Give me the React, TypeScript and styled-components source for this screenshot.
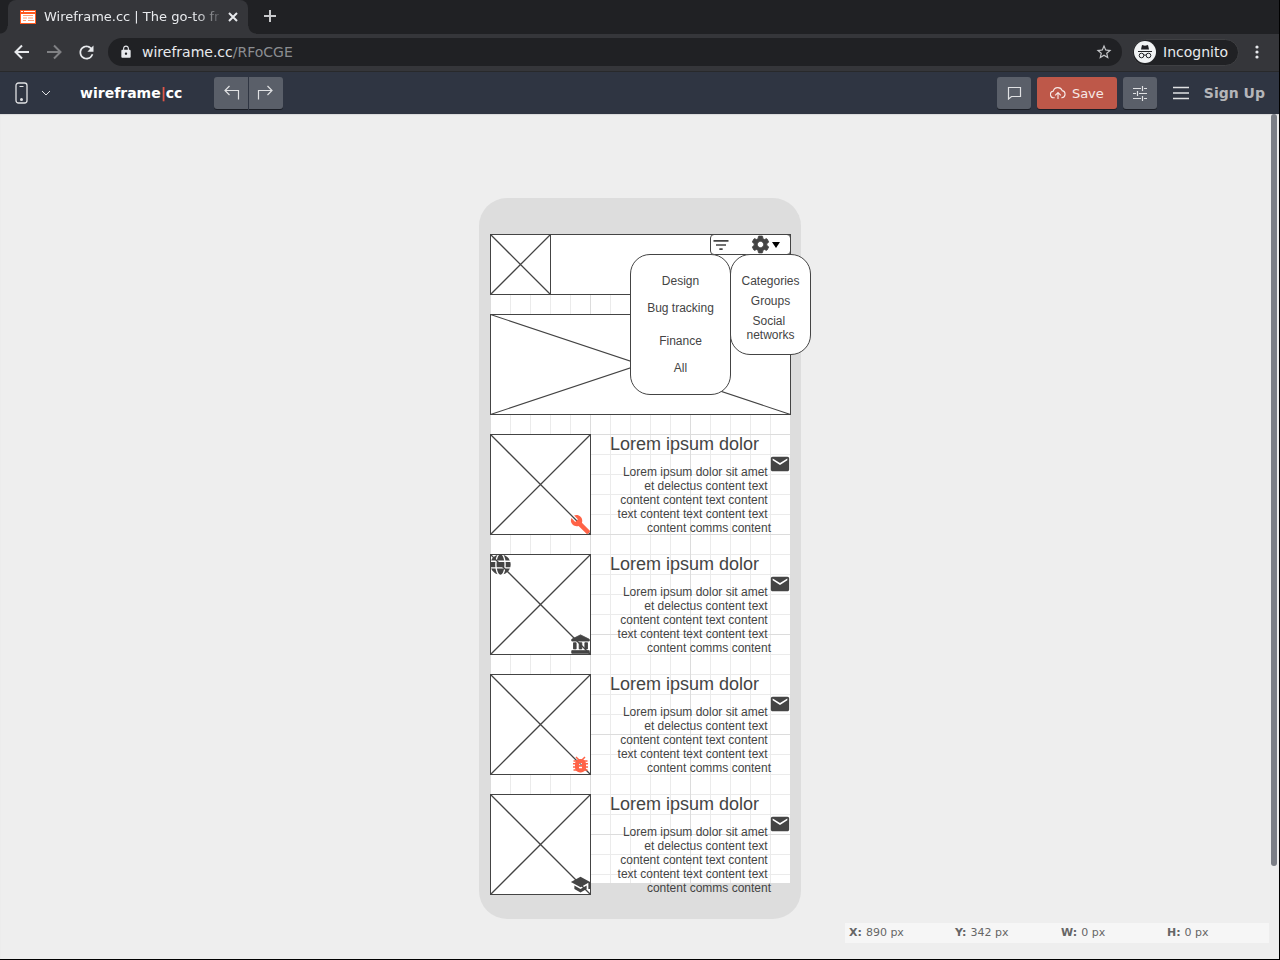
import React from "react";
import styled, { createGlobalStyle, css } from "styled-components";
import { MdFilterList, MdSettings, MdEmail, MdBuild, MdAccountBalance, MdSchool, MdStarBorder, MdRefresh, MdLock } from "react-icons/md";

const uiFont = '"DejaVu Sans", sans-serif';
const wireFont = '"Liberation Sans", Arial, sans-serif';
const ink = "#444444";
const accent = "#ff6347";

const GlobalStyle = createGlobalStyle`
  *, *::before, *::after { box-sizing: border-box; }
  body { margin: 0; background: #eeeeee; font-family: ${uiFont}; }
  button { font: inherit; color: inherit; border: 0; padding: 0; background: none; }
  h2, p, ul { margin: 0; padding: 0; }
  svg { display: block; flex: none; }
`;

const Window = styled.div`
  display: flex;
  flex-direction: column;
  min-height: 100vh;
  border-right: 1px solid #000;
  border-bottom: 1px solid #000;
`;

const TabStrip = styled.header`
  display: flex;
  height: 34px;
  padding-left: 8px;
  background: #202124;
`;

const Tab = styled.div`
  position: relative;
  display: flex;
  align-items: center;
  gap: 8px;
  width: 240px;
  padding: 0 10px 0 12px;
  border-radius: 8px 8px 0 0;
  background: #35363a;
  color: #e8eaed;
  font-size: 13px;
  &::before, &::after {
    content: "";
    position: absolute;
    bottom: 0;
    width: 8px;
    height: 8px;
  }
  &::before {
    left: -8px;
    background: radial-gradient(circle at 0 0, #202124 7px, #35363a 8px);
  }
  &::after {
    right: -8px;
    background: radial-gradient(circle at 100% 0, #202124 7px, #35363a 8px);
  }
`;

const TabTitle = styled.span`
  flex: 1;
  white-space: nowrap;
  line-height: 20px;
  mask-image: linear-gradient(to right, #000 152px, transparent 180px);
`;

const IconButton = styled.button<{ $w: number }>`
  display: flex;
  align-items: center;
  justify-content: center;
  width: ${(p) => p.$w}px;
  height: 32px;
  color: #e8eaed;
`;

const AddressBar = styled.div`
  display: flex;
  align-items: center;
  height: 38px;
  padding: 0 6px 1px;
  background: #35363a;
  border-bottom: 1px solid #28292b;
`;

const Omnibox = styled.div`
  flex: 1;
  display: flex;
  align-items: center;
  height: 28px;
  margin-left: 6px;
  padding: 0 9px 0 11px;
  gap: 9px;
  border-radius: 14px;
  background: #202124;
  color: #e8eaed;
  font-size: 14px;
`;

const Url = styled.span`
  flex: 1;
  line-height: 20px;
  span { color: #8b8d91; }
`;

const IncognitoChip = styled.div`
  display: flex;
  align-items: center;
  gap: 7px;
  height: 27px;
  margin: 0 2px 0 10px;
  padding: 0 10px 0 1px;
  border: 1px solid #3f4043;
  border-radius: 14px;
  background: #202124;
  color: #e8eaed;
  font-size: 14px;
`;

const AppBar = styled.nav`
  display: flex;
  align-items: center;
  height: 42px;
  padding: 0 14px;
  background: #2f3542;
  color: #e0e1e3;
`;

const DeviceButton = styled.button`
  display: flex;
  align-items: center;
  gap: 12px;
`;

const Logo = styled.a`
  margin: 0 32px 0 29px;
  color: #fff;
  font-size: 14px;
  font-weight: bold;
  line-height: 20px;
  text-decoration: none;
  span { color: #e05a4a; }
`;

const toolFace = css`
  display: flex;
  align-items: center;
  justify-content: center;
  height: 32px;
  box-shadow: 0 1px 0 #1b1e26;
`;

const ToolButton = styled.button<{ $radius?: string }>`
  ${toolFace}
  width: 34px;
  background: #5a5f69;
  border-radius: ${(p) => p.$radius ?? "3px"};
`;

const SaveButton = styled.button`
  ${toolFace}
  width: 80px;
  gap: 6px;
  margin: 0 6px;
  border-radius: 3px;
  background: #be5849;
  color: #f6e9e7;
  font-size: 13px;
`;

const History = styled.div`
  display: flex;
  gap: 1px;
  margin-right: auto;
`;

const MenuButton = styled.button`
  margin: 0 15px 0 16px;
`;

const SignUp = styled.a`
  color: #b5b6b9;
  font-size: 14px;
  font-weight: bold;
  text-decoration: none;
`;

const Canvas = styled.main`
  position: relative;
  flex: 1;
  display: flex;
  justify-content: center;
  align-items: flex-start;
  padding: 84px 0 40px 1px;
  background: #eeeeee;
  box-shadow: inset 0 1px 1px #d9d9da;
`;

const ScrollThumb = styled.div`
  position: absolute;
  top: 0;
  right: 2px;
  width: 6px;
  height: 752px;
  border-radius: 3px;
  background: #7b7e86;
`;

const Phone = styled.section`
  width: 322px;
  padding: 36px 11px;
  border-radius: 28px;
  background: #dddddd;
`;

const Screen = styled.div`
  position: relative;
  display: flex;
  flex-direction: column;
  gap: 19px;
  height: 649px;
  background-color: #fff;
  background-image:
    linear-gradient(to right, #dcdcdc 1px, transparent 1px),
    linear-gradient(to bottom, #dcdcdc 1px, transparent 1px),
    linear-gradient(to right, #ebebeb 1px, transparent 1px),
    linear-gradient(to bottom, #ebebeb 1px, transparent 1px);
  background-size: 100px 100px, 100px 100px, 20px 20px, 20px 20px;
  color: ${ink};
  font-family: ${wireFont};
  font-size: 12px;
  line-height: 14px;
`;

const WireHeader = styled.div`
  display: flex;
  justify-content: space-between;
  flex: none;
  width: 301px;
  height: 61px;
  border: 1px solid ${ink};
  background: #fff;
`;

const HeaderLogo = styled.div`
  width: 61px;
  margin: -1px;
`;

const HeaderTools = styled.div`
  display: flex;
  align-items: center;
  width: 81px;
  height: 21px;
  margin: -1px;
  border: 1px solid ${ink};
  border-radius: 4px;
`;

const SettingsGroup = styled.span`
  display: flex;
  align-items: center;
  gap: 1px;
  margin-left: 19px;
`;

const HeavyIcon = styled.span`
  path:not([fill="none"]) {
    stroke: currentColor;
    stroke-width: 1px;
  }
`;

const Picture = styled.div<{ $h: number }>`
  position: relative;
  flex: none;
  height: ${(p) => p.$h}px;
`;

const Banner = styled(Picture)`
  width: 301px;
`;

const CrossDrawing = styled.svg`
  background: #fff;
`;

const Popup = styled.ul<{ $x: number; $w: number; $gap: number; $h: number }>`
  position: absolute;
  top: 20px;
  left: ${(p) => p.$x}px;
  display: flex;
  flex-direction: column;
  gap: ${(p) => p.$gap}px;
  width: ${(p) => p.$w}px;
  height: ${(p) => p.$h}px;
  padding-top: 19px;
  border: 1px solid ${ink};
  border-radius: 20px;
  background: #fff;
  list-style: none;
  text-align: center;
  white-space: pre;
`;

const Divided = styled.li`
  margin-top: 6px;
`;

const Article = styled.article`
  display: flex;
  height: 101px;
  flex: none;
`;

const Thumb = styled(Picture)`
  width: 101px;
`;

const Badge = styled.span<{ $corner: "start" | "end"; $color?: string }>`
  position: absolute;
  color: ${(p) => p.$color ?? ink};
  ${(p) => (p.$corner === "end" ? "right: 0; bottom: 0;" : "left: 0; top: 0;")}
`;

const Copy = styled.div`
  flex: none;
  width: 161px;
  margin-left: 19px;
`;

const Title = styled.h2`
  font-size: 18px;
  font-weight: normal;
  line-height: 20px;
  white-space: nowrap;
`;

const Body = styled.p`
  margin-top: 11px;
  text-align: right;
  white-space: pre;
`;

const MailSlot = styled.span`
  margin-top: 19px;
  margin-left: -2px;
`;

const StatusBar = styled.dl`
  position: absolute;
  right: 10px;
  bottom: 16px;
  display: grid;
  grid-template-columns: repeat(4, 106px);
  margin: 0;
  background: #f6f6f6;
  color: #666;
  font-size: 11px;
  line-height: 20px;
`;

const Stat = styled.div`
  display: flex;
  gap: 4px;
  padding-left: 4px;
  dt { font-weight: bold; }
  dd { margin: 0; }
`;

function Cross({ w, h }: { w: number; h: number }) {
  return (
    <CrossDrawing width={w} height={h} viewBox={`0 0 ${w} ${h}`} fill="none" stroke={ink}>
      <path
        d={`M.5 .5L${w - 0.5} ${h - 0.5}M${w - 0.5} .5L.5 ${h - 0.5}`}
        strokeWidth={w === h ? 1.3 : 1.1}
      />
      <rect x=".5" y=".5" width={w - 1} height={h - 1} />
    </CrossDrawing>
  );
}

function Globe() {
  return (
    <svg width="21" height="21" viewBox="0 0 496 512" fill="currentColor">
      <path d="M336.500 160C322 70.700 287.800 8 248 8s-74 62.700-88.500 152h177zM152 256c0 22.200 1.200 43.500 3.300 64h185.300c2.100-20.500 3.300-41.800 3.300-64s-1.200-43.500-3.300-64H155.300c-2.100 20.500-3.300 41.800-3.300 64zm324.700-96c-28.600-67.900-86.500-120.400-158-141.600 24.400 33.800 41.200 84.700 50 141.600h108zM177.200 18.400C105.800 39.600 47.800 92.100 19.300 160h108c8.700-56.900 25.500-107.800 49.900-141.600zM487.400 192H372.700c2.100 21 3.300 42.500 3.300 64s-1.200 43-3.300 64h114.600c5.500-20.500 8.600-41.800 8.600-64s-3.100-43.500-8.500-64zM120 256c0-21.500 1.200-43 3.300-64H8.600C3.200 212.500 0 233.800 0 256s3.200 43.500 8.600 64h114.600c-2-21-3.200-42.500-3.200-64zm39.500 96c14.500 89.300 48.700 152 88.500 152s74-62.700 88.500-152h-177zm159.300 141.600c71.400-21.200 129.400-73.700 158-141.600h-108c-8.800 56.900-25.600 107.800-50 141.600zM19.300 352c28.600 67.900 86.500 120.400 158 141.600-24.400-33.800-41.200-84.700-50-141.600h-108z" />
    </svg>
  );
}

function Bug() {
  return (
    <svg width="21" height="21" viewBox="0 0 21 21" stroke="currentColor" fill="currentColor">
      <path d="M6 3l3 3M15 3l-3 3M3.500 7h14M3 9.700h15M3 13h15M3.500 16h14" strokeWidth="1.500" />
      <rect x="5" y="5" width="11" height="13.500" rx="5" stroke="none" />
      <path d="M9 10h3M9 13.500h3" stroke="#fff" strokeWidth="1.500" />
      <path d="M9.500 9l2 2" stroke={ink} strokeWidth="1" />
    </svg>
  );
}

const bodyText =
  "Lorem ipsum dolor sit amet \net delectus content text \ncontent content text content \ntext content text content text \ncontent comms content";

const articles = [
  { end: <MdBuild size={21} />, color: accent, globe: false },
  {
    end: (
      <HeavyIcon>
        <MdAccountBalance size={21} />
      </HeavyIcon>
    ),
    color: ink,
    globe: true,
  },
  { end: <Bug />, color: accent, globe: false },
  { end: <MdSchool size={21} />, color: ink, globe: false },
];

const stats = [
  ["X:", "890 px"],
  ["Y:", "342 px"],
  ["W:", "0 px"],
  ["H:", "0 px"],
];

export default function App() {
  return (
    <>
      <GlobalStyle />
      <Window>
        <TabStrip>
          <Tab>
            <svg width="16" height="14" viewBox="0 0 16 14">
              <rect width="16" height="14" fill="#ff5a1f" />
              <path d="M1 1h2v1H1zM4 1h11v1H4z" fill="#fff" />
              <path d="M1 4h14v9H1z" fill="#fff" />
              <path d="M3 5.500h10M3 8h4M8 8h5M3 10.500h3M8 10.500h6" stroke="#ff9a70" />
            </svg>
            <TabTitle>Wireframe.cc | The go-to fr</TabTitle>
            <button aria-label="Close tab">
              <svg width="14" height="12" viewBox="0 0 14 12" stroke="#e8eaed" strokeWidth="2">
                <path d="M2 2l8 8M10 2l-8 8" />
              </svg>
            </button>
          </Tab>
          <IconButton $w={44} aria-label="New tab">
            <svg width="14" height="14" viewBox="0 0 14 14" stroke="#c9cacc" strokeWidth="2">
              <path d="M7 1v12M1 7h12" />
            </svg>
          </IconButton>
        </TabStrip>
        <AddressBar>
          <IconButton $w={32} aria-label="Back">
            <svg width="16" height="16" viewBox="0 0 16 16" fill="none" stroke="currentColor" strokeWidth="2">
              <path d="M15 8H2M8 1.500L1.500 8 8 14.500" />
            </svg>
          </IconButton>
          <IconButton $w={32} aria-label="Forward">
            <svg width="16" height="16" viewBox="0 0 16 16" fill="none" stroke="#808184" strokeWidth="2">
              <path d="M1 8h13M8 1.500L14.500 8 8 14.500" />
            </svg>
          </IconButton>
          <IconButton $w={32} aria-label="Reload">
            <MdRefresh size={21} />
          </IconButton>
          <Omnibox>
            <MdLock size={14} />
            <Url>
              wireframe.cc<span>/RFoCGE</span>
            </Url>
            <MdStarBorder size={18} color="#c4c6c9" />
          </Omnibox>
          <IncognitoChip>
            <svg width="22" height="22" viewBox="0 0 22 22">
              <circle cx="11" cy="11" r="11" fill="#f1f3f4" />
              <path d="M7 8.500l1-4.500 3 .8 3-.8 1 4.500z" fill="#202124" />
              <path d="M4 10.500h14" stroke="#202124" strokeWidth="1" />
              <g fill="none" stroke="#202124">
                <circle cx="7.500" cy="14.500" r="2.300" />
                <circle cx="14.500" cy="14.500" r="2.300" />
                <path d="M9.800 14.300q1.200-.8 2.400 0" />
              </g>
            </svg>
            Incognito
          </IncognitoChip>
          <IconButton $w={32} aria-label="Browser menu">
            <svg width="4" height="16" viewBox="0 0 4 16" fill="currentColor">
              <circle cx="2" cy="3" r="1.600" />
              <circle cx="2" cy="8" r="1.600" />
              <circle cx="2" cy="13" r="1.600" />
            </svg>
          </IconButton>
        </AddressBar>
        <AppBar>
          <DeviceButton aria-label="Device">
            <svg width="15" height="22" viewBox="0 0 15 22" fill="none" stroke="currentColor">
              <rect x="2" y="1" width="11" height="20" rx="2.500" strokeWidth="1.300" />
              <path d="M5.500 4.500h4" />
              <circle cx="7.500" cy="17.500" r="1.500" fill="currentColor" stroke="none" />
            </svg>
            <svg width="10" height="6" viewBox="0 0 10 6" fill="none" stroke="currentColor">
              <path d="M1 1l4 4 4-4" />
            </svg>
          </DeviceButton>
          <Logo href="#">
            wireframe<span>|</span>cc
          </Logo>
          <History>
            <ToolButton $radius="3px 0 0 3px" aria-label="Undo">
              <svg width="18" height="16" viewBox="0 0 18 16" fill="none" stroke="currentColor" strokeWidth="1.200">
                <path d="M16.500 14.500V5.500H3M7.500 1L3 5.500 7.500 10" />
              </svg>
            </ToolButton>
            <ToolButton $radius="0 3px 3px 0" aria-label="Redo">
              <svg width="18" height="16" viewBox="0 0 18 16" fill="none" stroke="currentColor" strokeWidth="1.200">
                <path d="M1.500 14.500V5.500H15M10.500 1L15 5.500 10.500 10" />
              </svg>
            </ToolButton>
          </History>
          <ToolButton aria-label="Comments">
            <svg width="16" height="14" viewBox="0 0 16 14" fill="none" stroke="currentColor" strokeWidth="1.200">
              <path d="M2.500 1.500h12v9h-9l-3 2.500z" />
            </svg>
          </ToolButton>
          <SaveButton>
            <svg width="16" height="14" viewBox="0 0 17 14" fill="none" stroke="currentColor" strokeWidth="1.200">
              <path d="M5 12H4.500A3.500 3.500 0 0 1 3.500 5 5 5 0 0 1 13 4.500 3.800 3.800 0 0 1 12.500 12H12M8.500 13.500V7M5.500 9.500l3-3 3 3" />
            </svg>
            Save
          </SaveButton>
          <ToolButton aria-label="Settings">
            <svg width="14" height="16" viewBox="0 0 14 16" fill="none" stroke="currentColor" strokeWidth="1.200">
              <path d="M0 3.500h8M11 3.500h3M9.500 1v5M0 8.500h3M6 8.500h8M4.500 6v5M0 13.500h8M11 13.500h3M9.500 11v5" />
            </svg>
          </ToolButton>
          <MenuButton aria-label="Menu">
            <svg width="16" height="14" viewBox="0 0 16 14" stroke="currentColor" strokeWidth="1.300">
              <path d="M0 1.500h16M0 7h16M0 12.500h16" />
            </svg>
          </MenuButton>
          <SignUp href="#">Sign Up</SignUp>
        </AppBar>
        <Canvas>
          <Phone>
            <Screen>
              <WireHeader>
                <HeaderLogo>
                  <Cross w={61} h={61} />
                </HeaderLogo>
                <HeaderTools>
                  <MdFilterList size={20} />
                  <SettingsGroup>
                    <HeavyIcon>
                      <MdSettings size={21} />
                    </HeavyIcon>
                    <svg width="9" height="6" viewBox="0 0 9 6">
                      <path d="M0 0h8L4 6z" fill="#000" />
                    </svg>
                  </SettingsGroup>
                </HeaderTools>
              </WireHeader>
              <Banner $h={101}>
                <Cross w={301} h={101} />
              </Banner>
              {articles.map((a, i) => (
                <Article key={i}>
                  <Thumb $h={101}>
                    <Cross w={101} h={101} />
                    {a.globe && (
                      <Badge $corner="start">
                        <Globe />
                      </Badge>
                    )}
                    <Badge $corner="end" $color={a.color}>
                      {a.end}
                    </Badge>
                  </Thumb>
                  <Copy>
                    <Title>Lorem ipsum dolor</Title>
                    <Body>{bodyText}</Body>
                  </Copy>
                  <MailSlot>
                    <MdEmail size={22} />
                  </MailSlot>
                </Article>
              ))}
              <Popup $x={140} $w={101} $h={141} $gap={13}>
                <li>Design</li>
                <li>Bug tracking</li>
                <Divided>Finance</Divided>
                <li>All</li>
              </Popup>
              <Popup $x={240} $w={81} $h={101} $gap={6}>
                <li>Categories</li>
                <li>Groups</li>
                <li>{"Social \nnetworks"}</li>
              </Popup>
            </Screen>
          </Phone>
          <ScrollThumb />
          <StatusBar>
            {stats.map(([k, v]) => (
              <Stat key={k}>
                <dt>{k}</dt>
                <dd>{v}</dd>
              </Stat>
            ))}
          </StatusBar>
        </Canvas>
      </Window>
    </>
  );
}
